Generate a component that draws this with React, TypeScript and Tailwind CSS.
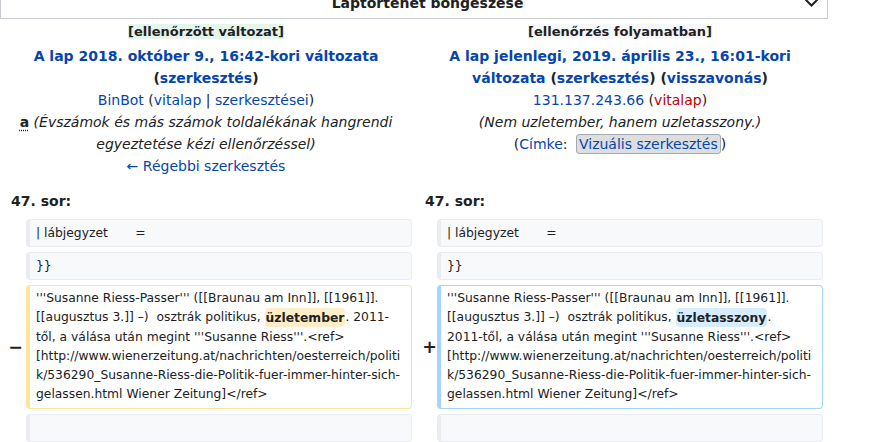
import React from 'react';

const link = 'text-[#0645ad]';

function Ctx({ children }: { children?: React.ReactNode }) {
  return (
    <div className="bg-[#f8f9fa] border border-l-4 border-[#eaecf0] rounded-[4px] pl-[6px] pr-[4px] py-[3px] h-[28px] leading-[20px] whitespace-pre text-[12.32px]">
      {children}
    </div>
  );
}

function Changed({ kind, children }: { kind: 'del' | 'add'; children: React.ReactNode }) {
  const color = kind === 'del' ? 'border-[#ffe49c]' : 'border-[#a3d3ff]';
  return (
    <div className={`bg-white border border-l-4 ${color} rounded-[4px] pl-[6px] pr-[4px] py-[3px] leading-[19.3px] whitespace-pre text-[12.32px]`}>
      {children}
    </div>
  );
}

function Mark({ kind, children }: { kind: 'del' | 'add'; children: React.ReactNode }) {
  const bg = kind === 'del' ? 'bg-[#feeec8]' : 'bg-[#d8ecff]';
  return <span className={`font-bold ${bg} rounded-[4px] py-[2.5px] px-[1px]`}>{children}</span>;
}

export default function App() {
  const tail = (
    <>
      {'[http://www.wienerzeitung.at/nachrichten/oesterreich/politi'}
      <br />
      {'k/536290_Susanne-Riess-die-Politik-fuer-immer-hinter-sich-'}
      <br />
      {'gelassen.html Wiener Zeitung]</ref>'}
    </>
  );

  return (
    <div className="font-['DejaVu_Sans',sans-serif] text-[#202122] w-[828px] overflow-hidden">
      {/* history dropdown, mostly scrolled out of view */}
      <div className="-mt-[14px] h-[33px] border border-[#c8ccd1] flex items-center">
        <div className="flex-1 text-center pl-[50px] text-[14px] font-bold leading-[16px]">Laptörténet böngészése</div>
        <svg width="15" height="9" viewBox="0 0 15 9" className="mr-[8px]">
          <path d="M1.5 1.5 L7.5 7.5 L13.5 1.5" fill="none" stroke="#202122" strokeWidth="2" />
        </svg>
      </div>

      {/* revision headers */}
      <div className="grid grid-cols-[412px_416px] text-center">
        <div>
          <div className="h-[15px]">
            <span className="inline-block bg-[#e6f5ec] text-[13px] font-bold leading-[15px]">[ellenőrzött változat]</span>
          </div>
          <div className="mt-[11px] text-[14px] leading-[22px]">
            <div className="font-bold">
              <span className={link}>A lap 2018. október 9., 16:42-kori változata</span>
              <br />(<span className={link}>szerkesztés</span>)
            </div>
            <div>
              <span className={link}>BinBot</span> (<span className={link}>vitalap</span> | <span className={link}>szerkesztései</span>)
            </div>
            <div>
              <span className="font-bold underline decoration-dotted underline-offset-[3px]">a</span>{' '}
              <span className="italic">(Évszámok és más számok toldalékának hangrendi<br />egyeztetése kézi ellenőrzéssel)</span>
            </div>
            <div className={link}>← Régebbi szerkesztés</div>
          </div>
        </div>
        <div>
          <div className="h-[15px]">
            <span className="inline-block bg-[#f6f7f8] text-[13px] font-bold leading-[15px]">[ellenőrzés folyamatban]</span>
          </div>
          <div className="mt-[11px] text-[14px] leading-[22px]">
            <div className="font-bold">
              <span className={link}>A lap jelenlegi, 2019. április 23., 16:01-kori</span>
              <br />
              <span className={link}>változata</span> (<span className={link}>szerkesztés</span>) (<span className={link}>visszavonás</span>)
            </div>
            <div>
              <span className={link}>131.137.243.66</span> (<span className="text-[#ba0000]">vitalap</span>)
            </div>
            <div className="italic">(Nem uzletember, hanem uzletasszony.)</div>
            <div>
              (<span className={link}>Címke</span>:{' '}
              <span className="ml-[4px] inline-block bg-[#dcdee0] border border-[#a2a9b1] rounded-[3px] px-[2px] leading-[18px] text-[#0645ad]">Vizuális szerkesztés</span>)
            </div>
          </div>
        </div>
      </div>

      {/* line numbers */}
      <div className="grid grid-cols-[412px_416px] mt-[13px] mb-[7px] text-[14px] font-bold leading-[22px]">
        <div className="pl-[11px]">47. sor:</div>
        <div className="pl-[13px]">47. sor:</div>
      </div>

      {/* diff rows */}
      <div className="grid grid-cols-[26px_386px_25px_386px] gap-y-[5px]">
        <div />
        <Ctx>{'| lábjegyzet       ='}</Ctx>
        <div />
        <Ctx>{'| lábjegyzet       ='}</Ctx>

        <div />
        <Ctx>{'}}'}</Ctx>
        <div />
        <Ctx>{'}}'}</Ctx>

        <div className="flex items-center justify-end pr-[3px] text-[17.5px] font-bold">−</div>
        <Changed kind="del">
          {"'''Susanne Riess-Passer''' ([[Braunau am Inn]], [[1961]]."}
          <br />
          {'[[augusztus 3.]] –)  osztrák politikus, '}
          <Mark kind="del">üzletember</Mark>
          {'. 2011-'}
          <br />
          {"től, a válása után megint '''Susanne Riess'''.<ref>"}
          <br />
          {tail}
        </Changed>
        <div className="flex items-center justify-end text-[17.5px] font-bold">+</div>
        <Changed kind="add">
          {"'''Susanne Riess-Passer''' ([[Braunau am Inn]], [[1961]]."}
          <br />
          {'[[augusztus 3.]] –)  osztrák politikus, '}
          <Mark kind="add">üzletasszony</Mark>
          {'.'}
          <br />
          {"2011-től, a válása után megint '''Susanne Riess'''.<ref>"}
          <br />
          {tail}
        </Changed>

        <div />
        <Ctx />
        <div />
        <Ctx />
      </div>
    </div>
  );
}
